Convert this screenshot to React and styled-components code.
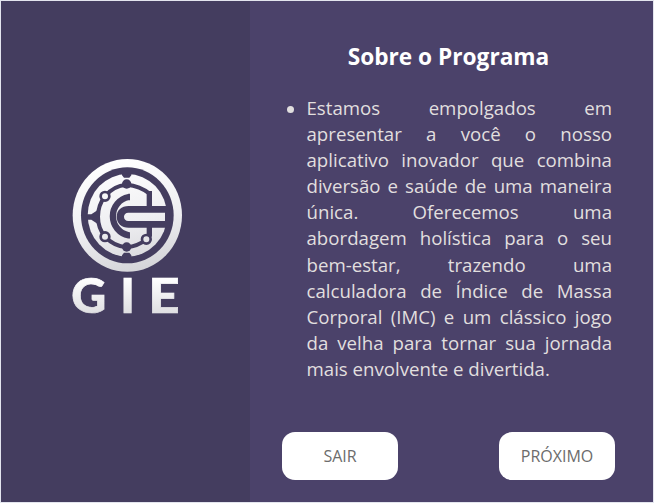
import React from "react";
import styled, { createGlobalStyle } from "styled-components";

const GlobalStyle = createGlobalStyle`
  * { box-sizing: border-box; }
  body { margin: 0; background: #e3e5ee; }
`;

const Window = styled.main`
  display: grid;
  grid-template-columns: 249px 1fr;
  width: 654px;
  height: 503px;
  border: 1px solid #e3e5ee;
  font-family: "Open Sans", sans-serif;
`;

const BrandPanel = styled.aside`
  display: flex;
  justify-content: center;
  padding: 149px 0 0 5px;
  background: #443d5f;
`;

const LogoArt = styled.svg`
  display: block;
  width: 128px;
  height: 190px;
  overflow: visible;
`;

const Content = styled.section`
  display: flex;
  flex-direction: column;
  padding: 40px 38px 22px 32px;
  background: #4b426a;
`;

const Title = styled.h1`
  margin: 0;
  font-size: 22.67px;
  line-height: 31px;
  font-weight: 700;
  text-align: center;
  color: #fff;
`;

const Topics = styled.ul`
  margin: 23px 3px 0 0;
  padding: 0;
  list-style: none;
`;

const Topic = styled.li`
  display: grid;
  grid-template-columns: 24.5px 1fr;
  font-size: 18.67px;
  line-height: 26.1px;
  color: #e1dfdf;

  &::before {
    content: "";
    width: 7px;
    height: 7px;
    margin: 11px 0 0 5px;
    border-radius: 50%;
    background: #e1dfdf;
  }
`;

const Paragraph = styled.p`
  margin: 0;
  text-align: justify;
`;

const Actions = styled.footer`
  display: flex;
  justify-content: space-between;
  margin-top: auto;
`;

const Button = styled.button`
  width: 116px;
  height: 48px;
  padding: 0;
  border: 0;
  border-radius: 13px;
  background: #fff;
  color: #6c6c6c;
  font: 400 16px "Open Sans", sans-serif;
`;

function Logo() {
  const dark = "#443d5f";
  const metal = "url(#metal)";
  return (
    <LogoArt viewBox="0 0 384 570" role="img" aria-label="GIE">
      <defs>
        <linearGradient id="metal" gradientUnits="userSpaceOnUse" x1="150" y1="27" x2="230" y2="365">
          <stop offset="0" stopColor="#fff" />
          <stop offset="0.55" stopColor="#efeff2" />
          <stop offset="1" stopColor="#d4d4d8" />
        </linearGradient>
        <linearGradient id="letters" gradientUnits="userSpaceOnUse" x1="0" y1="385" x2="0" y2="492">
          <stop offset="0" stopColor="#fff" />
          <stop offset="1" stopColor="#dedee1" />
        </linearGradient>
      </defs>
      <ellipse cx="190" cy="196" rx="164" ry="169" fill={metal} />
      <ellipse cx="190" cy="196" rx="139" ry="144" fill={dark} />
      <ellipse cx="190" cy="196" rx="119" ry="124" fill={metal} />
      <g fill="none" stroke={dark} strokeWidth="12">
        <path d="M258 132Q228 107 188 104Q148 107 123 139Q102 166 102 200Q102 234 123 260Q150 289 188 292Q222 289 247 268" />
        <path strokeWidth="16" d="M256 123V170M256 230V260" />
        <path strokeWidth="19" d="M198 141H194A58 58.5 0 0 0 194 256H198" />
      </g>
      <g fill={dark}>
        <path d="M174 70H202V76L196 83H180L174 76ZM174 322H202V316L196 308H180L174 316Z" />
        <circle cx="188" cy="102" r="14" />
        <circle cx="188" cy="291" r="14" />
        <path d="M68 193H82L98 182H107V220H98L82 209H68Z" />
        <path d="M316 168H194C172 168 158 181 158 200S172 233 194 233H316Z" />
      </g>
      <path fill={metal} d="M303 188H193C185 188 180 193 180 200S185 213 193 213H303Z" />
      <g fill={metal} stroke={dark} strokeWidth="8">
        <circle cx="123" cy="139" r="13" />
        <circle cx="123" cy="260" r="13" />
        <circle cx="247" cy="268" r="13" />
      </g>
      <g
        fontFamily="Lato, sans-serif"
        fontSize="145"
        fontWeight="900"
        fill="url(#letters)"
        stroke="url(#letters)"
        strokeWidth="2"
      >
        <text x="22" y="490">G</text>
        <text x="169" y="490">I</text>
        <text transform="scale(1.13 1)" x="224" y="490">E</text>
      </g>
    </LogoArt>
  );
}

export default function App() {
  return (
    <>
      <GlobalStyle />
      <Window>
        <BrandPanel>
          <Logo />
        </BrandPanel>
        <Content>
          <Title>Sobre o Programa</Title>
          <Topics>
            <Topic>
              <Paragraph>
                Estamos empolgados em apresentar a você o nosso aplicativo
                inovador que combina diversão e saúde de uma maneira única.
                Oferecemos uma abordagem holística para o seu bem-estar,
                trazendo uma calculadora de Índice de Massa Corporal (IMC) e um
                clássico jogo da velha para tornar sua jornada mais envolvente e
                divertida.
              </Paragraph>
            </Topic>
          </Topics>
          <Actions>
            <Button type="button">SAIR</Button>
            <Button type="button">PRÓXIMO</Button>
          </Actions>
        </Content>
      </Window>
    </>
  );
}
